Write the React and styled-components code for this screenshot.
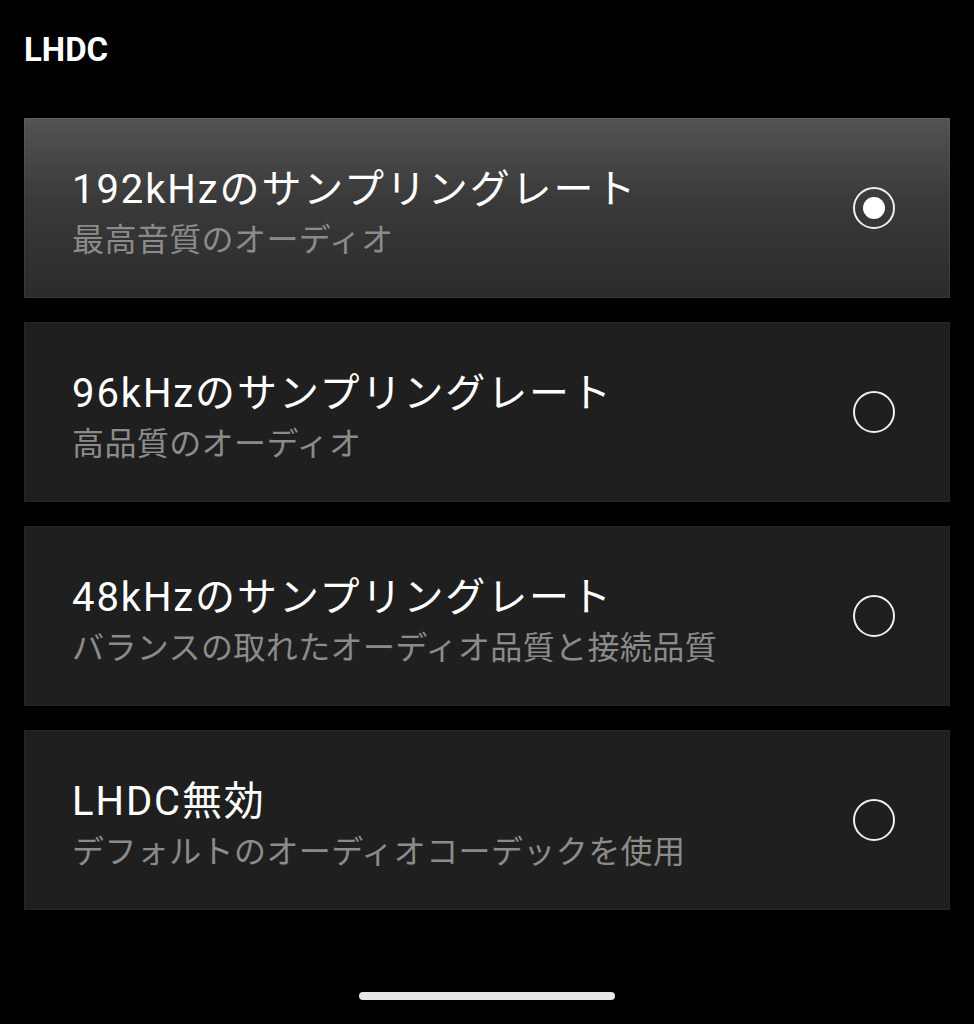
import React, { useState } from "react";
import styled, { createGlobalStyle, css } from "styled-components";

const GlobalStyle = createGlobalStyle`
  html, body {
    margin: 0;
    padding: 0;
    background: #000;
  }
  body {
    font-family: Roboto, "Noto Sans CJK JP", "Noto Sans", sans-serif;
    -webkit-font-smoothing: antialiased;
  }
  * { box-sizing: border-box; }
`;

const Screen = styled.div`
  width: 974px;
  height: 1024px;
  background: #000;
  display: flex;
  flex-direction: column;
  overflow: hidden;
`;

const Header = styled.h1`
  margin: 0;
  padding: 30px 24px 0;
  font-family: Roboto, "Noto Sans CJK JP", sans-serif;
  font-size: 33px;
  line-height: 40px;
  font-weight: 700;
  color: #fff;
`;

const List = styled.div`
  margin-top: 48px;
  padding: 0 24px;
  display: flex;
  flex-direction: column;
  gap: 24px;
`;

const Card = styled.button`
  all: unset;
  height: 180px;
  display: flex;
  align-items: center;
  padding: 0 55px 0 48px;
  cursor: pointer;
  background: #1f1f1f;
  box-shadow: inset 0 0 0 1px rgba(255, 255, 255, 0.03);
  ${(p) =>
    p.$selected &&
    css`
      background: linear-gradient(180deg, #535353 0%, #3a3a3a 45%, #2b2b2b 100%);
      box-shadow: inset 0 0 0 1px rgba(255, 255, 255, 0.06);
    `}
`;

const Texts = styled.div`
  flex: 1;
  display: flex;
  flex-direction: column;
  padding-top: 8px;
`;

const Title = styled.div`
  font-family: Roboto, "Noto Sans CJK JP", sans-serif;
  font-size: 40px;
  line-height: 56px;
  letter-spacing: 1.9px;
  color: #fff;
  white-space: nowrap;
`;

const Subtitle = styled.div`
  font-family: Roboto, "Noto Sans CJK JP", sans-serif;
  font-size: 32px;
  line-height: 44px;
  letter-spacing: 0.4px;
  color: #8b8b8b;
  white-space: nowrap;
`;

const Radio = styled.span`
  width: 42px;
  height: 42px;
  flex: none;
  border-radius: 50%;
  border: 2.5px solid #f0f0f0;
  display: flex;
  align-items: center;
  justify-content: center;
  &::after {
    content: "";
    width: 22px;
    height: 22px;
    border-radius: 50%;
    background: #fff;
    display: ${(p) => (p.$checked ? "block" : "none")};
  }
`;

const Spacer = styled.div`
  flex: 1;
`;

const HomeBar = styled.div`
  align-self: center;
  width: 256px;
  height: 8px;
  border-radius: 4px;
  background: #e6e6e6;
  margin-bottom: 24px;
`;

const options = [
  { title: "192kHzのサンプリングレート", sub: "最高音質のオーディオ" },
  { title: "96kHzのサンプリングレート", sub: "高品質のオーディオ" },
  { title: "48kHzのサンプリングレート", sub: "バランスの取れたオーディオ品質と接続品質" },
  { title: "LHDC無効", sub: "デフォルトのオーディオコーデックを使用" },
];

export default function App() {
  const [selected, setSelected] = useState(0);
  return (
    <>
      <GlobalStyle />
      <Screen>
        <Header>LHDC</Header>
        <List>
          {options.map((o, i) => (
            <Card key={i} $selected={selected === i} onClick={() => setSelected(i)}>
              <Texts>
                <Title>{o.title}</Title>
                <Subtitle>{o.sub}</Subtitle>
              </Texts>
              <Radio $checked={selected === i} />
            </Card>
          ))}
        </List>
        <Spacer />
        <HomeBar />
      </Screen>
    </>
  );
}
